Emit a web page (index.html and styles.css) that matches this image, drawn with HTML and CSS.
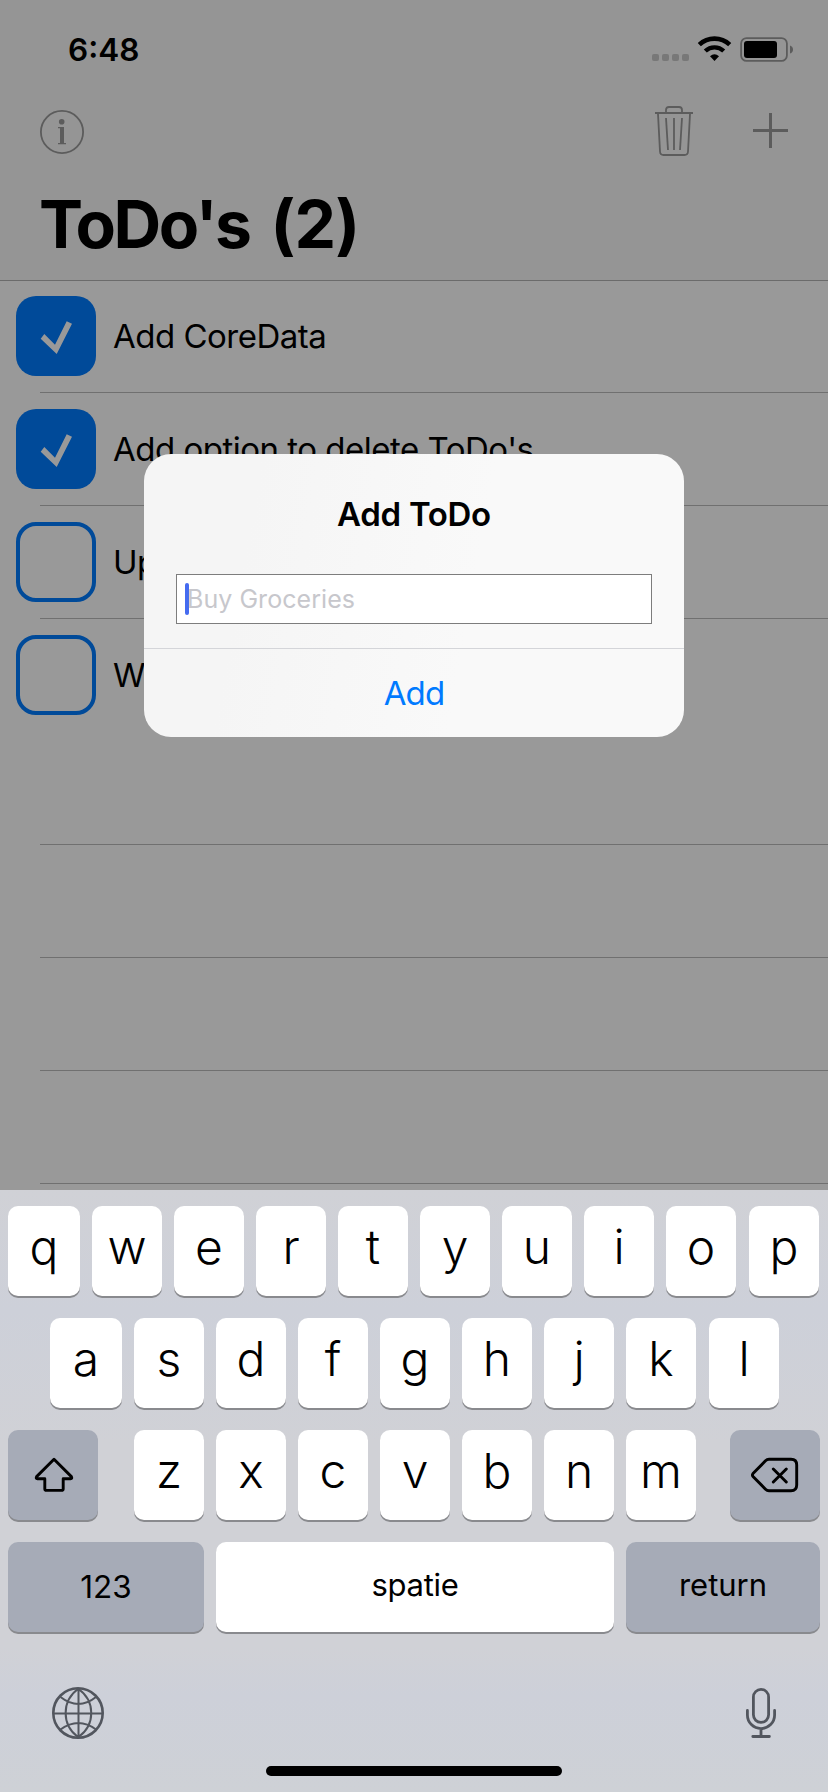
FILE: index.html
```html
<!DOCTYPE html>
<html lang="nl">
<head>
<meta charset="utf-8">
<title>ToDo's</title>
<link rel="stylesheet" href="styles.css">
</head>
<body>
<div class="screen">
  <header class="header">
    <div class="status">
      <span class="time">6:48</span>
      <svg class="status-icons" width="142" height="26" viewBox="0 0 142 26">
        <g fill="#787878"><rect x="0" y="18" width="7" height="7" rx="2"/><rect x="10" y="18" width="7" height="7" rx="2"/><rect x="20" y="18" width="7" height="7" rx="2"/><rect x="30" y="18" width="7" height="7" rx="2"/></g>
        <g fill="none" stroke="#000"><path d="M47.3 8.6a22.2 22.2 0 0 1 30.4 0" stroke-width="4.6"/><path d="M53.3 15a13.4 13.4 0 0 1 18.4 0" stroke-width="4.4"/></g>
        <path d="M58 20.3q4.500-4 9 0l-4.500 4.700z"/>
        <rect x="89.100" y="2.100" width="45.800" height="22.800" rx="5.500" fill="none" stroke="#5c5c5c" stroke-width="1.800"/>
        <rect x="92" y="5" width="33" height="17" rx="3"/>
        <path d="M138 9.500q3 1 3 4t-3 4z" fill="#5c5c5c"/>
      </svg>
    </div>
    <nav class="nav">
      <svg width="44" height="44" viewBox="0 0 44 44"><circle cx="22" cy="22" r="21.100" fill="none" stroke="#5c5c5c" stroke-width="1.800"/><circle cx="21.700" cy="11.800" r="2.800" fill="#5c5c5c"/><path d="M18 17h6v16h2v1.200h-8V33h2V18.200h-2z" fill="#5c5c5c"/></svg>
      <div class="nav-actions">
        <svg width="38" height="50" viewBox="0 0 38 50" fill="none" stroke="#5c5c5c" stroke-width="1.800"><path d="M0 7h38M11 7V4q0-3 3-3h10q3 0 3 3v3M3 8l2 37.500q.2 3.500 3.500 3.500h21q3.300 0 3.500-3.500L35 8M11 12l2 32M19 12v32M27 12l-2 32"/></svg>
        <svg width="35" height="35" viewBox="0 0 35 35" stroke="#5c5c5c" stroke-width="3"><path d="M0 17.500h35M17.500 0v35"/></svg>
      </div>
    </nav>
    <h1 class="title"><span class="title-name">ToDo's</span> (2)</h1>
  </header>
  <main class="list">
    <div class="row"><span class="box checked"><svg width="80" height="80"><path d="M24.700 42.700 28.300 38 39 48.700 50.700 25.300 56 27.700 40.700 58z" fill="#999"/></svg></span><span class="label">Add CoreData</span></div>
    <div class="row"><span class="box checked"><svg width="80" height="80"><path d="M24.700 42.700 28.300 38 39 48.700 50.700 25.300 56 27.700 40.700 58z" fill="#999"/></svg></span><span class="label">Add option to delete ToDo's</span></div>
    <div class="row"><span class="box"></span><span class="label">Up</span></div>
    <div class="row last"><span class="box"></span><span class="label">W</span></div>
    <div class="row"></div>
    <div class="row"></div>
    <div class="row"></div>
    <div class="row"></div>
  </main>
  <section class="dialog">
    <h2 class="dialog-title">Add ToDo</h2>
    <div class="field"><span class="caret"></span><span class="placeholder">Buy Groceries</span></div>
    <div class="dialog-action">Add</div>
  </section>
  <section class="keyboard">
    <div class="keys"><span class="key wide">q</span><span class="key">w</span><span class="key">e</span><span class="key">r</span><span class="key">t</span><span class="key">y</span><span class="key">u</span><span class="key">i</span><span class="key">o</span><span class="key end">p</span></div>
    <div class="keys second"><span class="key wide">a</span><span class="key">s</span><span class="key">d</span><span class="key">f</span><span class="key">g</span><span class="key">h</span><span class="key">j</span><span class="key">k</span><span class="key end">l</span></div>
    <div class="keys">
      <span class="key mod shift"><svg width="40" height="36" viewBox="0 0 40 36" fill="none" stroke="#000" stroke-width="2.900" stroke-linejoin="round"><path d="M20 2.300 2.600 19.600q-1 2.100.8 2.100h7.400v10q0 1.700 1.700 1.700h15q1.700 0 1.700-1.700v-10h7.400q1.800 0 .8-2.100z"/></svg></span>
      <span class="key">z</span><span class="key">x</span><span class="key">c</span><span class="key">v</span><span class="key">b</span><span class="key">n</span><span class="key">m</span>
      <span class="key mod delete"><svg width="48" height="36" viewBox="0 0 48 36" fill="none" stroke="#000" stroke-width="2.900" stroke-linecap="round" stroke-linejoin="round"><path d="M18 2.300h22q5.700 0 5.700 5.700v20q0 5.700-5.700 5.700H18q-2 0-3.500-1.500L2 19.500Q.9 18 2 16.500L14.500 3.800Q16 2.300 18 2.300zM22.300 12l13 13M35.300 12l-13 13"/></svg></span>
    </div>
    <div class="keys"><span class="key mod num">123</span><span class="key space">spatie</span><span class="key mod return">return</span></div>
    <div class="tools">
      <svg width="52" height="52" viewBox="0 0 52 52" fill="none" stroke="#52565e" stroke-width="2"><circle cx="26" cy="26" r="24.700" stroke-width="2.600"/><path d="M1 26.500h50M26.500 1v50M26 2C9.500 14 9.500 38 26 50M26.500 2c17 12 17 36 0 48M8.500 10q18 14 35.500 0M8.500 42.500q18-13 35.500 0"/></svg>
      <svg width="30" height="50" viewBox="0 0 30 50" fill="none" stroke="#52565e" stroke-width="2.800" stroke-linecap="round"><rect x="7.400" y="1.400" width="15.200" height="33" rx="7.600"/><path d="M1.400 22.500V27a13.600 13.600 0 0 0 27.200 0v-4.500M15 41v7M6.800 48.500h16.600"/></svg>
    </div>
    <div class="home"></div>
  </section>
</div>
</body>
</html>
```
FILE: styles.css
```css
* { box-sizing: border-box; }
body { margin: 0; font-family: Inter, "Liberation Sans", sans-serif; color: #000; }
svg { display: block; flex: none; }
.screen { position: relative; width: 828px; height: 1792px; overflow: hidden; background: #999; display: flex; flex-direction: column; }

.header { height: 281px; flex: none; background: #959595; border-bottom: 1px solid #6b6b6b; }
.status { display: flex; justify-content: space-between; height: 100px; padding: 36px 34px 0 68px; }
.time { font-size: 31.500px; font-weight: 600; line-height: 28px; letter-spacing: 0; }
.nav { display: flex; justify-content: space-between; align-items: center; height: 62px; padding: 2px 40px 0; }
.nav-actions { display: flex; align-items: center; gap: 60px; margin-top: -3px; }
.title { margin: 22px 0 0 39px; font-size: 66px; line-height: 80px; font-weight: 700; letter-spacing: -0.800px; word-spacing: 6px; white-space: nowrap; }
.title-name { letter-spacing: -2.400px; }

.list { height: 909px; flex: none; overflow: hidden; }
.row { position: relative; height: 113px; padding: 15px 16px 0; display: flex; gap: 17px; background: linear-gradient(#707070, #707070) 40px 111px / 100% 1px no-repeat; }
.row.last { background: none; }
.box { width: 80px; height: 80px; flex: none; border: 4px solid #004a99; border-radius: 20px; }
.box.checked { border: 0; background: #004a99; }
.label { font-size: 33px; line-height: 80px; white-space: nowrap; letter-spacing: -0.500px; }

.dialog { position: absolute; left: 144px; top: 454px; width: 540px; height: 283px; border-radius: 27px; background: linear-gradient(100deg, #f5f5f5 20%, #f9f9f9 60%); display: flex; flex-direction: column; }
.dialog-title { margin: 38px 0 0; font-size: 33px; line-height: 44px; font-weight: 600; text-align: center; letter-spacing: -0.300px; }
.field { display: flex; align-items: center; height: 50px; margin: 38px 32px 24px; padding-left: 8px; border: 1px solid #7d7d7d; background: #fff; }
.caret { width: 4px; height: 32px; border-radius: 2px; background: #456bf0; }
.placeholder { margin-left: -2px; font-size: 25px; line-height: 48px; letter-spacing: 0.050px; color: #c7c7cc; }
.dialog-action { flex: 1; border-top: 1px solid #d4d5d9; font-size: 33px; line-height: 88px; text-align: center; color: #007aff; letter-spacing: -0.900px; }

.keyboard { height: 602px; flex: none; padding-top: 16px; background: linear-gradient(#d0d1d6, #cdd0d9 20%, #d0d1d6 42%, #d0d1d6 76%, #cdd0d9 84%, #ced1d6); }
.keys { display: flex; gap: 12px; height: 90px; margin: 0 8px 22px; }
.keys.second { margin-left: 50px; }
.key { width: 70px; height: 90px; flex: none; display: flex; align-items: center; justify-content: center; padding-bottom: 8px; border-radius: 10px; background: #fff; box-shadow: 0 2px 0 #898a8e; font-size: 48px; font-weight: 350; line-height: 60px; }
.key.wide { width: 72px; }
.key.end { margin-left: 1px; }
.key.mod { background: #a6abb7; padding: 0; }
.key.mod.shift { width: 90px; margin-right: 24px; padding-left: 2px; }
.key.delete { width: 90px; margin-left: 22px; }
.key.num { width: 196px; font-size: 31.500px; font-weight: 400; }
.key.space { width: 398px; font-size: 31px; font-weight: 400; padding-bottom: 4px; letter-spacing: -0.300px; }
.key.mod.return { width: 194px; font-size: 31px; font-weight: 400; padding-bottom: 4px; }
.tools { display: flex; justify-content: space-between; align-items: center; height: 62px; margin: 50px 52px 0; }
.home { width: 296px; height: 10px; margin: 22px auto 0; border-radius: 5px; background: #000; }
```
